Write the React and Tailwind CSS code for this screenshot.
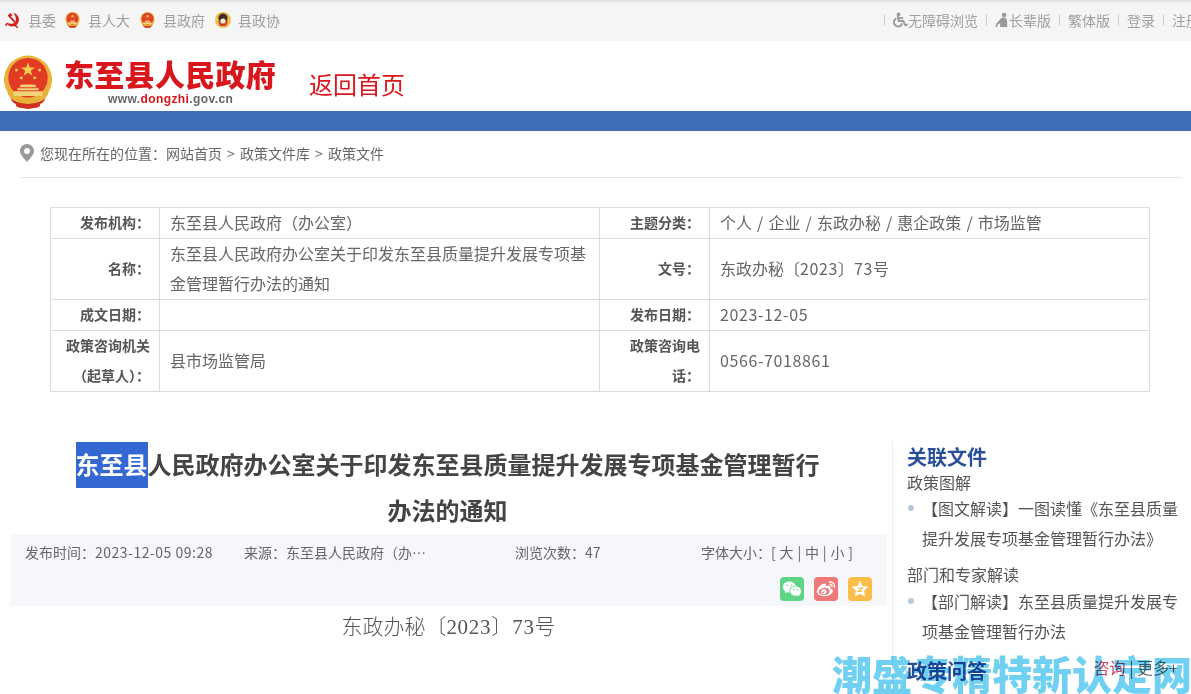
import { FaWheelchair } from "react-icons/fa";
import { RiWechatFill, RiWeiboFill } from "react-icons/ri";

const FONT = { fontFamily: '"Noto Sans CJK SC", "Liberation Sans", sans-serif' };

const Emblem = ({ className }) => (
  <svg viewBox="0 0 52 56" className={className}>
    <path d="M8 44 C10 52 16 49 20 53 C24 56 28 56 32 53 C36 49 42 52 44 44 L38 42 L14 42 Z" fill="#c8281e" />
    <circle cx="26" cy="25" r="25" fill="#e8b23a" />
    <circle cx="26" cy="23" r="20.5" fill="#e23a24" />
    <polygon points="26,7 27.8,12.4 33.4,12.4 28.9,15.8 30.6,21 26,17.8 21.4,21 23.1,15.8 18.6,12.4 24.2,12.4" fill="#f5cf4c" />
    <circle cx="14" cy="15" r="1.6" fill="#f5cf4c" />
    <circle cx="38" cy="15" r="1.6" fill="#f5cf4c" />
    <circle cx="19" cy="23" r="1.6" fill="#f5cf4c" />
    <circle cx="33" cy="23" r="1.6" fill="#f5cf4c" />
    <path d="M19 30 H33 L35 33 H17 Z M15 34 H37 V36 H15 Z M11 37 H41 V42 H11 Z" fill="#f3d27a" />
    <path d="M5 32 C7 42 14 47 26 47 C38 47 45 42 47 32 L47 40 C43 48 36 50 26 50 C16 50 9 48 5 40 Z" fill="#e8b23a" />
    <path d="M12 47 C18 52 34 52 40 47 L38 53 C32 56 20 56 14 53 Z" fill="#d0301f" />
  </svg>
);

const PartyMark = () => (
  <svg viewBox="0 0 16 16" className="h-4 w-4">
    <path d="M8 0.8 C12 1.6 14.5 5 13.8 9 C13.4 11 12.3 12.3 11.2 13.2 L13.6 15.4 L12 15.9 L9.4 14 C6.8 15 4.2 14.4 2.4 12.6 L0.9 14.3 L0.1 13.3 L1.6 10.6 C3.8 12 7.4 12.4 9.8 10.4 C11.8 8.4 11.2 4 8 0.8 Z" fill="#d3201c" />
    <path d="M2.6 3.4 L5.6 1 L7.4 3.2 L5.9 4.4 L10.6 9.6 L9.2 10.8 L4.4 5.6 Z" fill="#d3201c" />
  </svg>
);

const CppccMark = () => (
  <svg viewBox="0 0 16 16" className="h-4 w-4">
    <circle cx="8" cy="8" r="8" fill="#e9c34e" />
    <circle cx="8" cy="6" r="4.6" fill="#4a2b24" />
    <path d="M3 9 H13 L11 14 H5 Z" fill="#d23a2a" />
    <circle cx="8" cy="9" r="2.6" fill="#f4f1d0" />
  </svg>
);

const ElderIcon = () => (
  <svg viewBox="0 0 15 16" className="h-4 w-[14px] shrink-0" fill="#999">
    <circle cx="9.8" cy="2.6" r="2.5" />
    <path d="M7.5 5.5 C10.5 5 13 6.5 13 9.5 V15.5 H5.5 V11.5 L2.8 13.2 L2 15.5 H0.5 L1.4 12 L5 8 C5.6 7 6.4 6 7.5 5.5 Z" />
  </svg>
);

const FavIcon = () => (
  <svg viewBox="0 0 18 18" className="h-[18px] w-[18px]">
    <path d="M9 0.8 L11.5 6 L17.2 6.8 L13.1 10.8 L14.1 16.5 L9 13.8 L3.9 16.5 L4.9 10.8 L0.8 6.8 L6.5 6 Z" fill="#fff" />
    <path d="M6.4 8 H11.4 L7.4 11.4 H11.6" fill="none" stroke="#fbbd4a" strokeWidth="1.2" />
  </svg>
);

const Bar = () => <span className="block h-3 w-px shrink-0 bg-[#cfcfcf]" />;

const Num = ({ children }) => <span className="tracking-[0.6px]">{children}</span>;

const rows = [
  { h: "h-[31px]", a: "发布机构：", b: "东至县人民政府（办公室）", c: "主题分类：", d: <span className="[word-spacing:1.5px]">个人 / 企业 / 东政办秘 / 惠企政策 / 市场监管</span> },
  { h: "h-[61px]", a: "名称：", b: "东至县人民政府办公室关于印发东至县质量提升发展专项基金管理暂行办法的通知", c: "文号：", d: <>东政办秘〔<Num>2023</Num>〕<Num>73</Num>号</> },
  { h: "h-[31px]", a: "成文日期：", b: "", c: "发布日期：", d: <Num>2023-12-05</Num> },
  { h: "h-[61px]", a: "政策咨询机关（起草人）：", b: "县市场监管局", c: "政策咨询电话：", d: <Num>0566-7018861</Num> },
];

const labelCls = "border border-[#dcdcdc] pl-[10px] pr-[9px] text-right text-sm font-bold text-[#555] leading-[30px]";
const valueCls = "border border-[#dcdcdc] pl-[10px] pr-2 text-base text-[#666] leading-[30px]";

const App = () => {
  return (
    <div className="relative h-[694px] w-[1191px] overflow-hidden bg-white" style={FONT}>
      {/* top links */}
      <div className="flex h-[41px] items-center justify-between overflow-hidden border-t-2 border-[#e4e4e4] bg-[#f5f5f5] pb-[3px] text-sm text-[#a0a0a0]">
        <div className="flex items-center pl-[5px]">
          <PartyMark />
          <span className="ml-[7px]">县委</span>
          <Emblem className="ml-[9px] h-4 w-[15px]" />
          <span className="ml-2">县人大</span>
          <Emblem className="ml-[10px] h-4 w-[15px]" />
          <span className="ml-2">县政府</span>
          <span className="ml-[10px]"><CppccMark /></span>
          <span className="ml-[7px]">县政协</span>
        </div>
        <div className="mr-[-9px] flex shrink-0 items-center">
          <Bar />
          <FaWheelchair className="ml-2 h-4 w-[15px] shrink-0 text-[#999]" />
          <span>无障碍浏览</span>
          <span className="ml-2"><Bar /></span>
          <span className="ml-2"><ElderIcon /></span>
          <span>长辈版</span>
          <span className="ml-2"><Bar /></span>
          <span className="ml-2">繁体版</span>
          <span className="ml-2"><Bar /></span>
          <span className="ml-2">登录</span>
          <span className="ml-2"><Bar /></span>
          <span className="ml-2">注册</span>
        </div>
      </div>

      {/* logo */}
      <div className="flex h-[70px] items-start pl-[3px] pt-[14px]">
        <Emblem className="h-[55px] w-[50px] shrink-0" />
        <div className="ml-[11px] w-[214px]">
          <div className="h-[34px] whitespace-nowrap text-[30px] font-black leading-[36px] tracking-[0.3px] text-[#d9161c]">东至县人民政府</div>
          <div className="ml-[44px] mt-[3px] whitespace-nowrap text-xs font-bold leading-[14px] tracking-[0.4px] text-[#666]" style={{ fontFamily: '"Liberation Sans", sans-serif' }}>
            www.<span className="text-[#d9161c]">dongzhi</span>.gov.cn
          </div>
        </div>
        <a className="ml-[31px] mt-[9px] text-2xl leading-[40px] text-[#d9161c]">返回首页</a>
      </div>

      <div className="h-5 bg-[#3f6db8]" />

      {/* breadcrumb */}
      <div className="ml-5 mr-[10px] flex h-[47px] items-center border-b border-[#e5e5e5] pb-[2px] text-sm text-[#666]">
        <svg viewBox="0 0 14 18" className="h-[18px] w-[14px] shrink-0" fill="#999">
          <path fillRule="evenodd" d="M7 0 C3 0 0 3 0 7 C0 11 5 15.5 7 18 C9 15.5 14 11 14 7 C14 3 11 0 7 0 Z M7 4 A3 3 0 1 1 7 10 A3 3 0 1 1 7 4 Z" />
        </svg>
        <span className="ml-[6px]">您现在所在的位置：</span>
        <span>网站首页</span>
        <span className="w-[18px] text-center">&gt;</span>
        <span>政策文件库</span>
        <span className="w-[18px] text-center">&gt;</span>
        <span>政策文件</span>
      </div>

      {/* info table */}
      <table className="ml-[50px] mt-[29px] w-[1100px] table-fixed border-collapse">
        <colgroup>
          <col className="w-[109px]" />
          <col className="w-[440px]" />
          <col className="w-[110px]" />
          <col />
        </colgroup>
        <tbody>
          {rows.map((row) => (
            <tr key={row.a} className={row.h}>
              <td className={labelCls}><div className="-translate-y-px">{row.a}</div></td>
              <td className={valueCls}><div className="-translate-y-px">{row.b}</div></td>
              <td className={labelCls}><div className="-translate-y-px">{row.c}</div></td>
              <td className={valueCls}><div className="-translate-y-px">{row.d}</div></td>
            </tr>
          ))}
        </tbody>
      </table>

      {/* article + sidebar */}
      <div className="mt-[49px] flex">
        <div className="ml-[10px] w-[877px] shrink-0">
          <h1 className="mx-auto mt-px w-[748px] -translate-x-px -translate-y-px text-center text-2xl font-bold leading-[46px] text-[#444]">
            <span className="inline-block h-[46px] translate-y-px bg-[#3367d1] text-white">
              <span className="inline-block -translate-y-px">东至县</span>
            </span>
            人民政府办公室关于印发东至县质量提升发展专项基金管理暂行办法的通知
          </h1>

          <div className="h-[72px] bg-[#f5f7fa] px-[15px] pt-[7px] text-sm text-[#666]">
            <div className="flex h-[22px] items-center leading-[22px]">
              <span className="w-[219px] shrink-0">发布时间：<span className="tracking-[0.5px]">2023-12-05 09:28</span></span>
              <span className="w-[183px] shrink-0 truncate">来源：东至县人民政府（办公室）</span>
              <span className="ml-[88px] w-[186px] shrink-0">浏览次数：47</span>
              <span className="whitespace-nowrap [word-spacing:0.7px]">字体大小：[ 大 | 中 | 小 ]</span>
            </div>
            <div className="mt-[14px] flex justify-end gap-[10px]">
              <span className="flex h-6 w-6 items-center justify-center rounded bg-[#5dd585] text-white">
                <RiWechatFill className="h-5 w-5" />
              </span>
              <span className="flex h-6 w-6 items-center justify-center rounded bg-[#f07878] text-white">
                <RiWeiboFill className="h-5 w-5" />
              </span>
              <span className="flex h-6 w-6 items-center justify-center rounded bg-[#fbbd4a]">
                <FavIcon />
              </span>
            </div>
          </div>

          <p className="pt-[4px] text-center text-[21px] font-light leading-[30px] text-[#555]">
            东政办秘〔<span className="tracking-[0.7px]" style={{ fontFamily: '"Liberation Serif", serif' }}>2023</span>〕<span className="tracking-[0.7px]" style={{ fontFamily: '"Liberation Serif", serif' }}>73</span>号
          </p>
        </div>

        <aside className="ml-[5px] h-[260px] w-[299px] shrink-0 border-l border-[#eeeeee] pl-[14px] pr-[9px] text-base text-[#555]">
          <h3 className="text-xl font-bold leading-[32px] text-[#2a4f9a]">关联文件</h3>
          <p className="mt-[-1px] leading-[20px]">政策图解</p>
          <div className="relative mt-px pl-[15px] leading-[30px]">
            <span className="absolute left-[1px] top-[12px] h-[6px] w-[6px] rounded-full bg-[#b8c8dc]" />
            【图文解读】一图读懂《东至县质量提升发展专项基金管理暂行办法》
          </div>
          <p className="mt-[9px] leading-[24px]">部门和专家解读</p>
          <div className="relative pl-[15px] leading-[30px]">
            <span className="absolute left-[1px] top-[12px] h-[6px] w-[6px] rounded-full bg-[#b8c8dc]" />
            【部门解读】东至县质量提升发展专项基金管理暂行办法
          </div>
          <div className="mt-[9px] flex items-start justify-between pr-[4px]">
            <span className="text-xl font-bold leading-[32px] text-[#2a4f9a]">政策问答</span>
            <span className="leading-[24px] text-[#666]"><span className="text-[#d9455f]">咨询</span> | 更多+</span>
          </div>
        </aside>
      </div>

      {/* site watermark */}
      <div className="absolute bottom-[-1px] right-[-1px] whitespace-nowrap text-[40px] font-black leading-[44px] text-[#6fd0f2] mix-blend-multiply">潮盛专精特新认定网</div>
    </div>
  );
};

export default App;
